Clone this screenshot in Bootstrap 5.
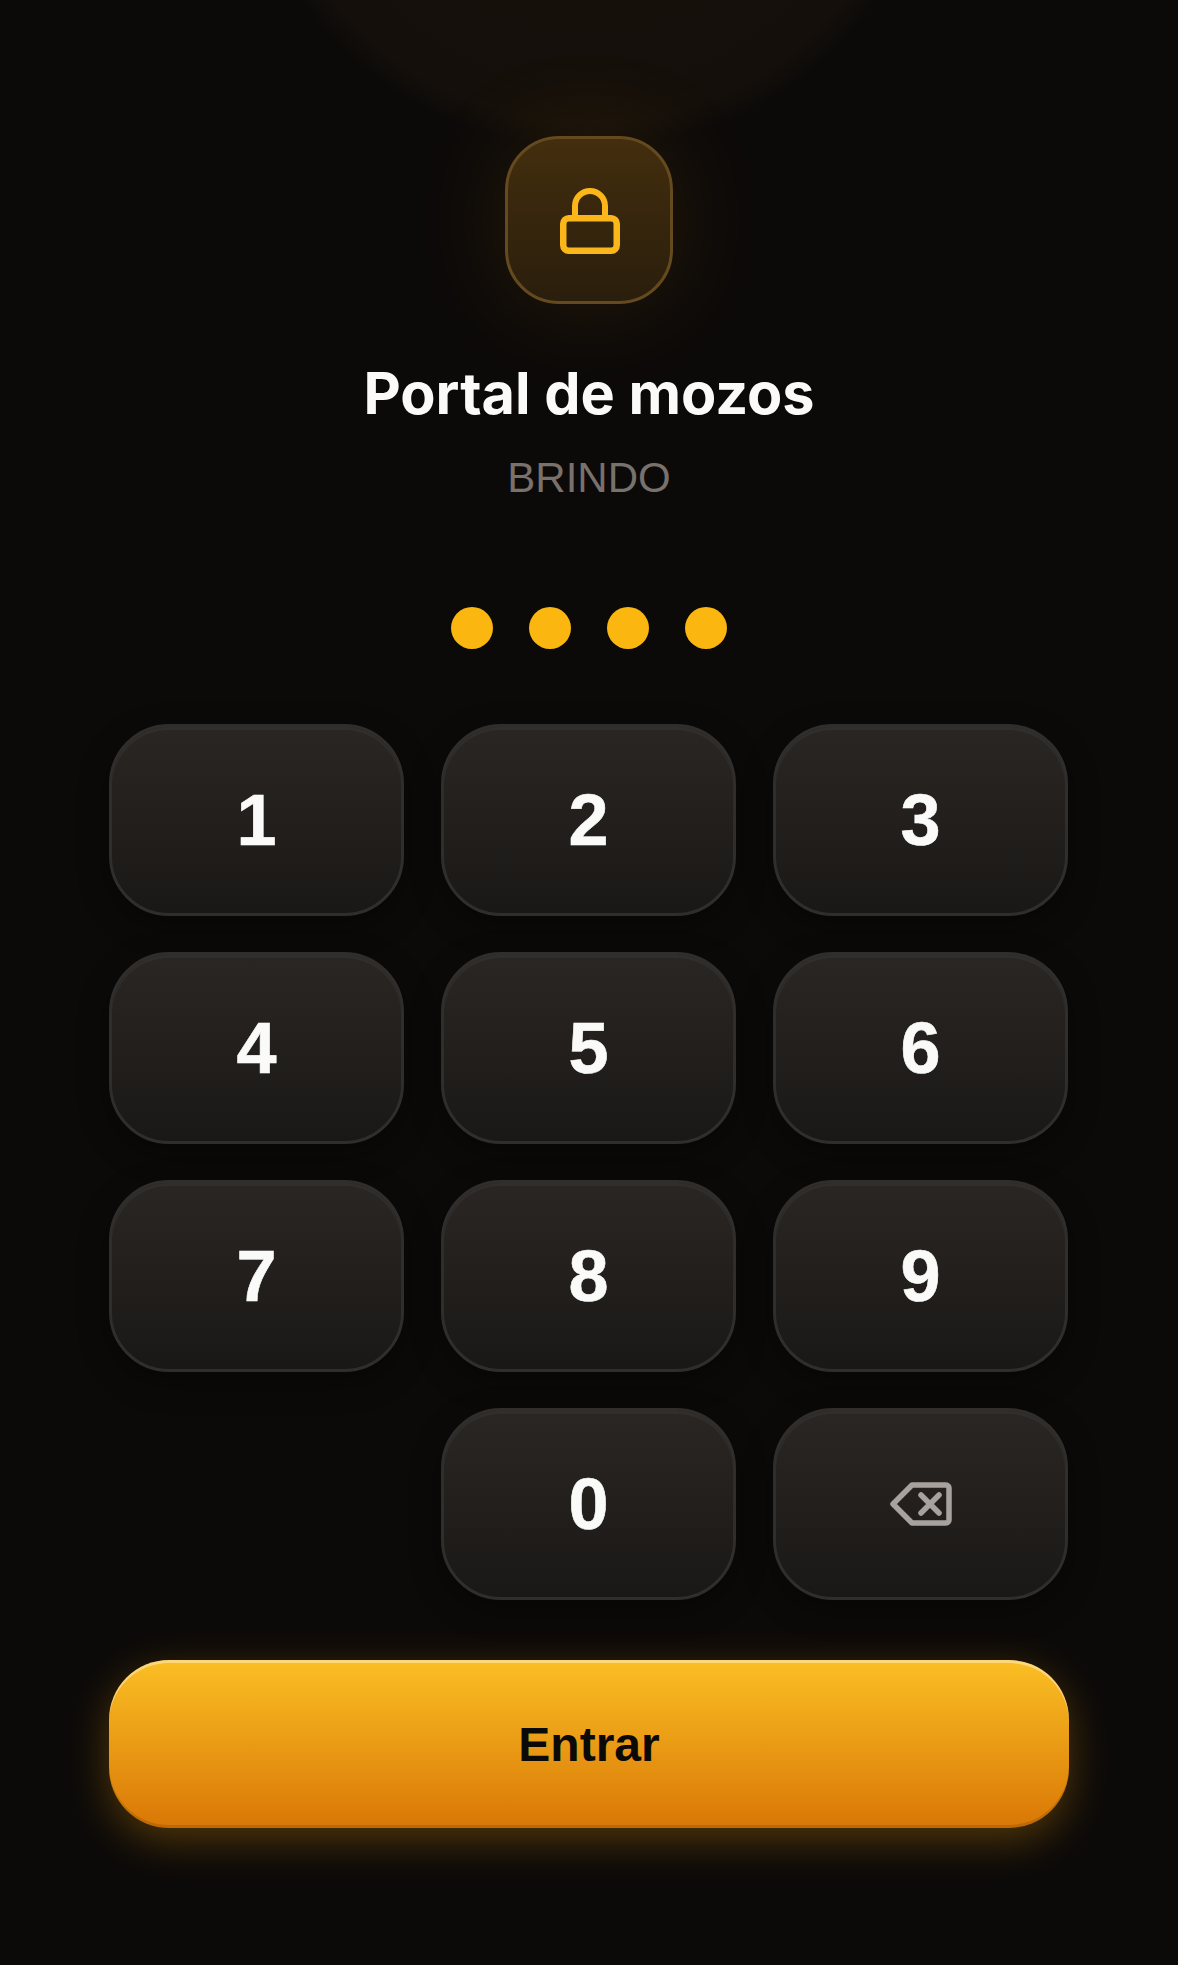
<!DOCTYPE html>
<html lang="es">
<head>
  <meta charset="UTF-8">
  <meta name="viewport" content="width=device-width, initial-scale=1">
  <title>Portal de mozos</title>
  <link href="https://cdn.jsdelivr.net/npm/bootstrap@5.3.2/dist/css/bootstrap.min.css" rel="stylesheet">
  <style>
    body {
      background: #0c0a09;
      min-height: 1965px;
      font-family: "Liberation Sans", Arial, sans-serif;
    }
    .pin-page {
      position: relative;
      overflow: hidden;
      min-height: 1965px;
      padding: 136px 109px 0;
    }
    /* halo arriba de todo */
    .top-glow {
      position: absolute;
      left: 50%;
      top: -552px;
      width: 702px;
      height: 702px;
      margin-left: -351px;
      border-radius: 50%;
      background: radial-gradient(closest-side, rgba(120, 80, 25, .1) 0%, rgba(120, 80, 25, .075) 92%, rgba(120, 80, 25, 0) 100%);
      pointer-events: none;
    }
    .lock-box {
      position: relative;
      width: 168px;
      height: 168px;
      border-radius: 54px;
      border: 3px solid #644a1e;
      background: linear-gradient(180deg, #432e0e 0%, #2a1e0c 100%);
      box-shadow: 0 0 90px 10px rgba(245, 158, 11, .09);
    }
    .lock-icon {
      margin: 2px 0 0 2px;
    }
    .portal-title {
      position: relative;
      margin: 55px 0 0;
      font-family: Inter, "Liberation Sans", sans-serif;
      font-size: 57.6px;
      line-height: 68px;
      font-weight: 700;
      color: #fafaf9;
    }
    .portal-sub {
      margin: 26px 0 0;
      font-size: 42px;
      line-height: 50px;
      color: #78716c;
    }
    .pin-dots {
      margin-top: 104px;
      gap: 36px;
    }
    .pin-dot {
      width: 42px;
      height: 42px;
      border-radius: 50%;
      background: #fbb60f;
    }
    .keypad {
      margin-top: 75px;
      grid-template-columns: repeat(3, 295px);
      gap: 36px 37px;
    }
    .key-btn {
      height: 192px;
      padding: 0;
      border: 3px solid #302e2c;
      border-radius: 60px;
      background: linear-gradient(180deg, #2a2624 0%, #1a1816 100%);
      box-shadow: inset 0 3px 0 rgba(255, 255, 255, .04), 0 10px 30px rgba(0, 0, 0, .4);
      font-size: 72px;
      line-height: 1;
      font-weight: 700;
      color: #fafaf9;
      -webkit-text-stroke: .6px #fafaf9;
    }
    .enter-btn {
      display: block;
      width: 100%;
      height: 168px;
      margin-top: 60px;
      padding: 2px 0 0;
      border: 0;
      border-radius: 60px;
      background: linear-gradient(180deg, #fbbf24 0%, #d97706 100%);
      box-shadow: inset 0 3px 0 rgba(255, 255, 255, .4), inset 0 -3px 0 rgba(0, 0, 0, .12), 0 12px 40px rgba(245, 158, 11, .3);
      font-size: 48px;
      font-weight: 700;
      color: #0c0a09;
    }
  </style>
</head>
<body>

<main class="pin-page">
  <div class="top-glow"></div>

  <div class="lock-box d-flex align-items-center justify-content-center mx-auto">
    <svg class="lock-icon d-block" width="60" height="66" viewBox="0 0 60 66" fill="none" stroke="#fbb61a" stroke-width="6">
      <path d="M15 29V18a15 15 0 0 1 30 0v11"/>
      <rect x="3.25" y="30.25" width="53.5" height="32.5" rx="5.5" stroke-width="6.5"/>
    </svg>
  </div>

  <h1 class="portal-title text-center">Portal de mozos</h1>
  <p class="portal-sub text-center">BRINDO</p>

  <div class="pin-dots d-flex justify-content-center">
    <span class="pin-dot"></span>
    <span class="pin-dot"></span>
    <span class="pin-dot"></span>
    <span class="pin-dot"></span>
  </div>

  <div class="keypad d-grid">
    <button type="button" class="btn key-btn">1</button>
    <button type="button" class="btn key-btn">2</button>
    <button type="button" class="btn key-btn">3</button>
    <button type="button" class="btn key-btn">4</button>
    <button type="button" class="btn key-btn">5</button>
    <button type="button" class="btn key-btn">6</button>
    <button type="button" class="btn key-btn">7</button>
    <button type="button" class="btn key-btn">8</button>
    <button type="button" class="btn key-btn">9</button>
    <div></div>
    <button type="button" class="btn key-btn">0</button>
    <button type="button" class="btn key-btn" aria-label="Borrar">
      <svg class="d-block mx-auto" width="62" height="44" viewBox="0 0 62 44" fill="none" stroke="#a8a29e" stroke-width="5.5" stroke-linejoin="round" stroke-linecap="round">
        <path d="M22 3H56a3 3 0 0 1 3 3v32a3 3 0 0 1-3 3H22L3 22Z"/>
        <path d="M31 13l18 18M49 13L31 31"/>
      </svg>
    </button>
  </div>

  <button type="button" class="btn enter-btn">Entrar</button>
</main>

<script src="https://cdn.jsdelivr.net/npm/bootstrap@5.3.2/dist/js/bootstrap.bundle.min.js"></script>
</body>
</html>
